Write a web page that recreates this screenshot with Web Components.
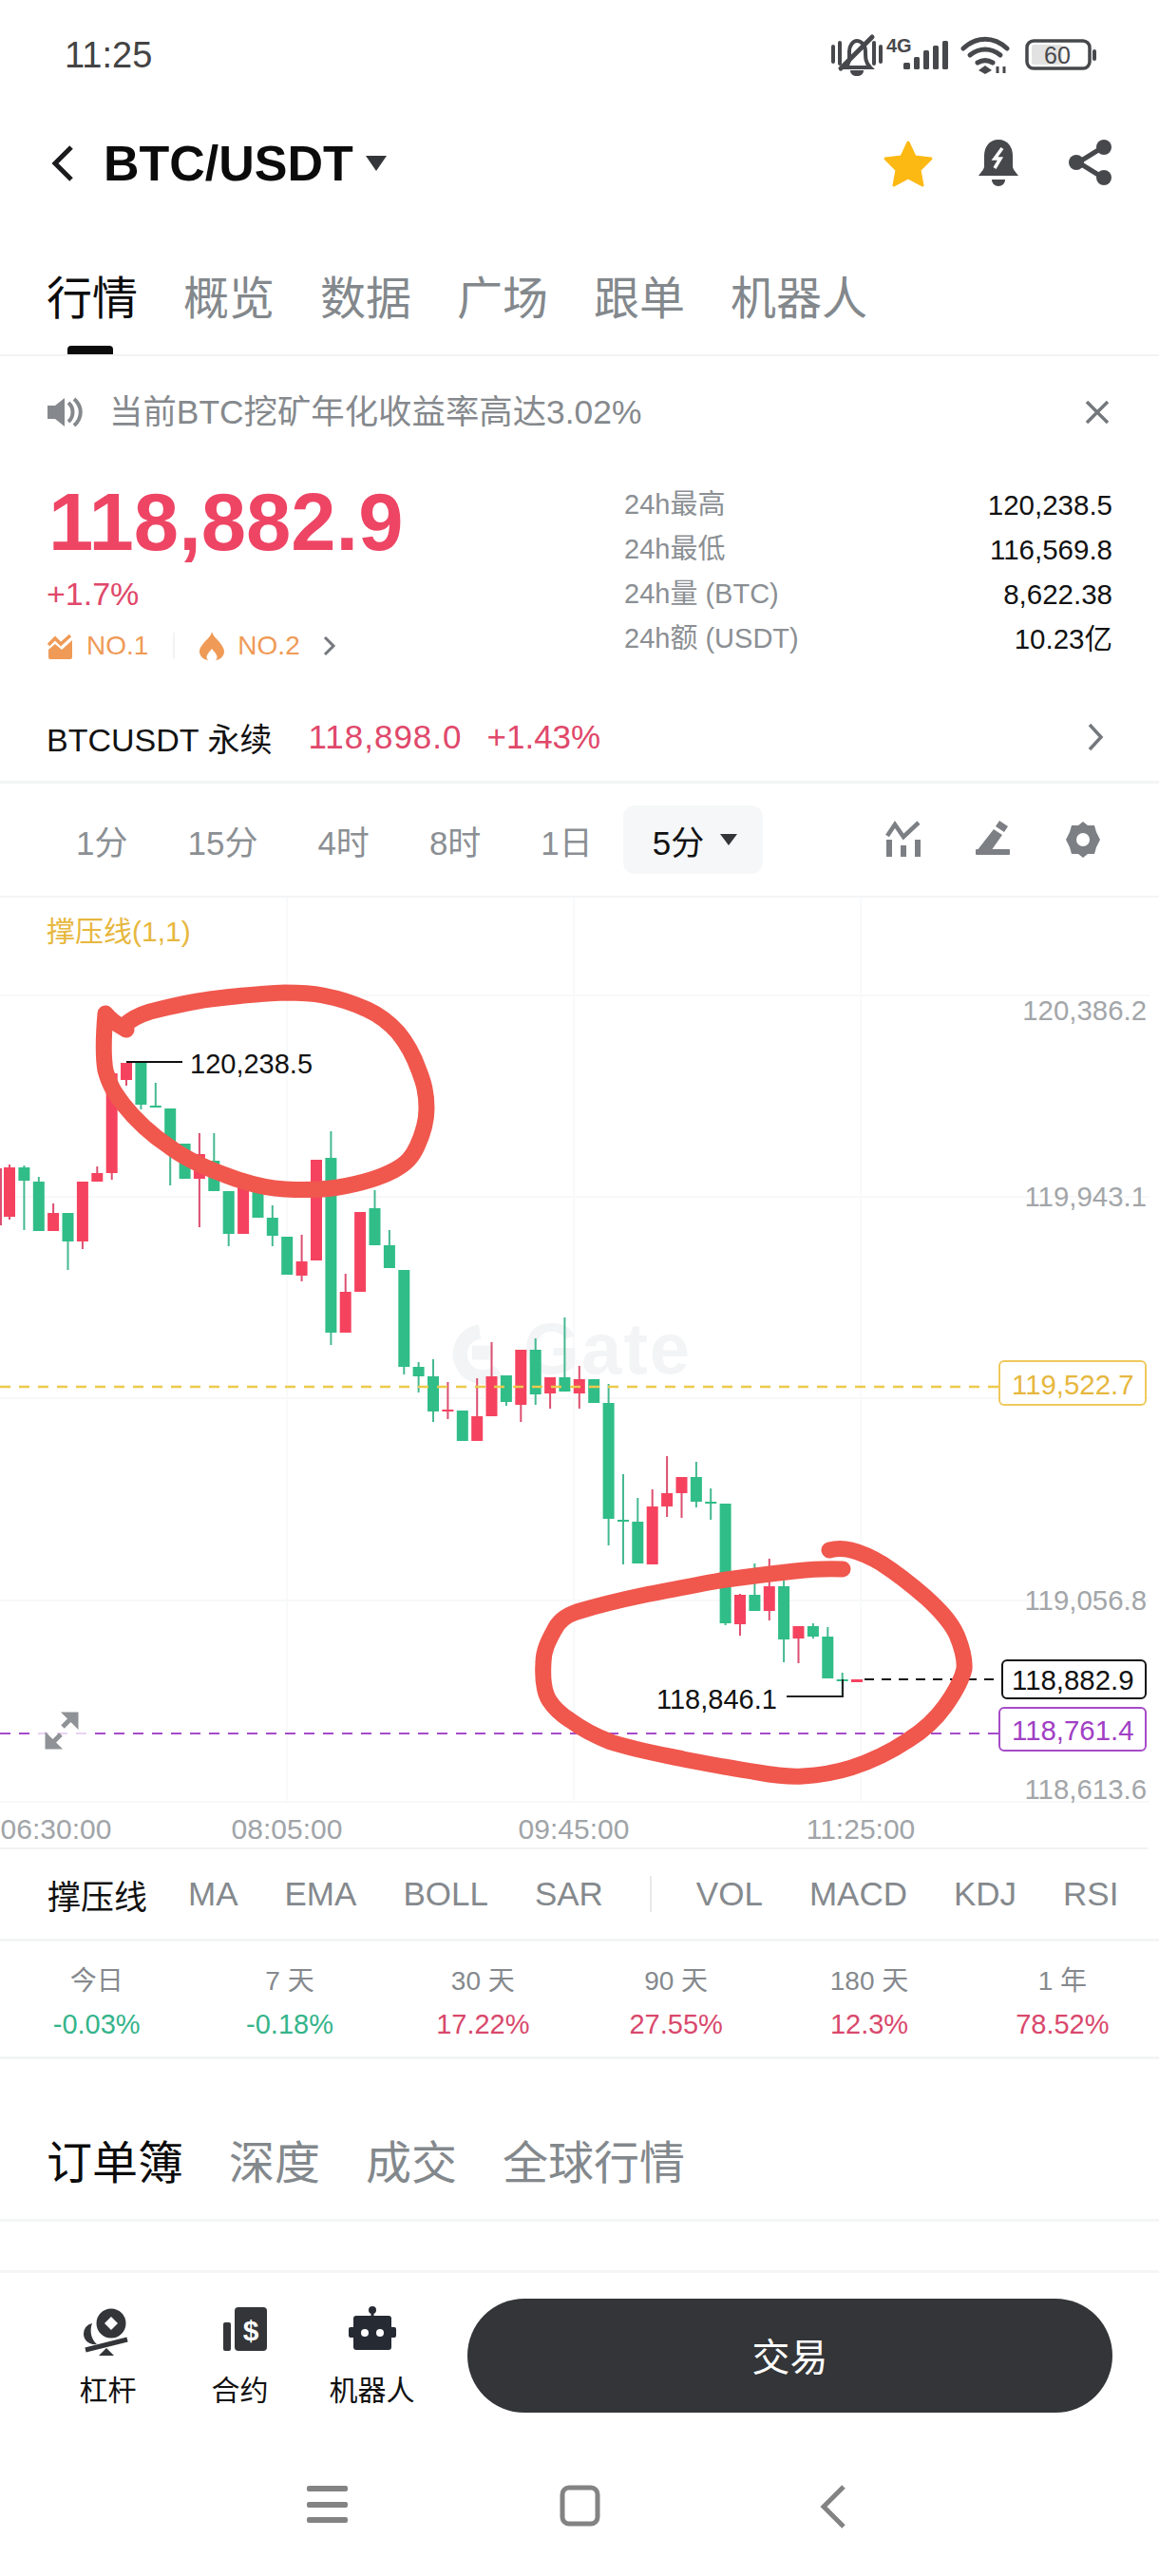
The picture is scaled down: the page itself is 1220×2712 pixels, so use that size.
<!DOCTYPE html>
<html lang="zh-CN">
<head>
<meta charset="utf-8">
<title>BTC/USDT</title>
<style>
  html, body { margin: 0; padding: 0; background: #fff; }
  body {
    width: 1220px;
    height: 2712px;
    overflow: hidden;
    font-family: "Liberation Sans", "Noto Sans CJK SC", sans-serif;
    color: #111;
  }
</style>
</head>
<body>
<status-bar></status-bar>
<market-header></market-header>
<tab-strip size="main" items="行情,概览,数据,广场,跟单,机器人" underline></tab-strip>
<notice-bar>当前BTC挖矿年化收益率高达3.02%</notice-bar>
<price-panel></price-panel>
<perp-row></perp-row>
<interval-bar></interval-bar>
<kline-chart></kline-chart>
<indicator-row></indicator-row>
<period-stats></period-stats>
<tab-strip size="orders" items="订单簿,深度,成交,全球行情"></tab-strip>
<div style="height:51px;border-top:3px solid #f4f5f6;border-bottom:3px solid #f4f5f6"></div>
<trade-bar></trade-bar>
<system-nav></system-nav>

<script>
/**
 * Base for all blocks on the page: open shadow root, css + markup from the class
 */
class Block extends HTMLElement {
  constructor() {
    super();
    this.attachShadow({ mode: 'open' });
  }
  connectedCallback() {
    this.shadowRoot.innerHTML = `<style>${this.css()}</style>${this.html()}`;
  }
  css() { return ''; }
  html() { return ''; }
}

class StatusBar extends Block {
  css() {
    return `
      :host { display: flex; height: 116px; position: relative; }
      .time { margin: 34px 0 0 68px; font-size: 38px; line-height: 48px; color: #444; }
      svg { margin-left: auto; display: block; }
      text { font-family: "Liberation Sans", sans-serif; }
    `;
  }
  html() {
    return `
      <span class="time">11:25</span>
      <svg width="350" height="116" viewBox="870 0 350 116">
        <g transform="translate(-66,0)">
        <g fill="none" stroke="#47484c" stroke-width="4" stroke-linecap="round">
          <path d="M943 49v16M950 45v22M986 45v22M993 49v16"/>
          <path d="M956 71c5-5 4-10 4-17 0-6 4-11 8-11s9 4 9 11c0 7 0 12 5 17z"/>
          <path d="M951 72 L984 39" stroke-width="5"/>
        </g>
        <path d="M961 74h14c0 4-3 6-7 6s-7-2-7-6z" fill="#47484c"/>
        </g>
        <text x="933" y="55" font-size="20" font-weight="700" fill="#47484c">4G</text>
        <g fill="#47484c">
          <rect x="951" y="66" width="7" height="7" rx="1.5"/>
          <rect x="962" y="60" width="6" height="13" rx="1.5"/>
          <rect x="972" y="53" width="6" height="20" rx="1.5"/>
          <rect x="982" y="48" width="6" height="25" rx="1.5"/>
          <rect x="992" y="43" width="6" height="30" rx="1.5"/>
        </g>
        <g fill="none" stroke="#47484c" stroke-width="5" stroke-linecap="round">
          <path d="M1014 51c14-13 32-13 46 0"/>
          <path d="M1021 58c10-8 22-8 32 0"/>
          <path d="M1029 66c5-3 11-3 16 0"/>
        </g>
        <path d="M1037 69l7 5-7 4-7-4z" fill="#47484c"/>
        <path d="M1050 70v7M1057 70v7" stroke="#47484c" stroke-width="3"/>
        <rect x="1081" y="43" width="66" height="29" rx="7" fill="none" stroke="#47484c" stroke-width="3.5"/>
        <rect x="1086" y="47" width="32" height="21" rx="2" fill="#e2e2e2"/>
        <rect x="1150" y="52" width="4" height="12" rx="2" fill="#47484c"/>
        <text x="1113" y="67" font-size="25" fill="#47484c" text-anchor="middle">60</text>
      </svg>
    `;
  }
}

class MarketHeader extends Block {
  css() {
    return `
      :host { display: flex; align-items: center; height: 112px; position: relative; }
      .back { margin-left: 53px; display: block; }
      .pair { margin-left: 30px; font-size: 52px; line-height: 60px; font-weight: 700; color: #0b0b0b; white-space: nowrap; }
      .caret { margin-left: 13px; display: block; }
      .acts { margin-left: auto; display: flex; margin-right: 49px; }
      .acts svg { display: block; }
    `;
  }
  html() {
    return `
      <svg class="back" width="26" height="40" viewBox="0 0 26 40"><path d="M22 3 L5 20 L22 37" fill="none" stroke="#1b1b1d" stroke-width="5"/></svg>
      <span class="pair">BTC/USDT</span>
      <svg class="caret" width="22" height="16" viewBox="0 0 22 16"><path d="M0 0h22L11 16z" fill="#333538"/></svg>
      <div class="acts">
        <svg width="54" height="52" viewBox="0 0 54 52" style="margin-right:46px">
          <path d="M27 4l7 15 17 2-12 12 3 16-15-8-15 8 3-16L3 21l17-2z" fill="#fdb913" stroke="#fdb913" stroke-width="3" stroke-linejoin="round"/>
        </svg>
        <svg width="44" height="50" viewBox="0 0 44 50" style="margin-right:52px">
          <path d="M22 1c10 0 15 8 15 17v11c0 3 3 6 6 10H1c3-4 6-7 6-10V18C7 9 12 1 22 1z" fill="#47484c"/>
          <path d="M15 43h14c0 4-3 7-7 7s-7-3-7-7z" fill="#47484c"/>
          <path d="M26 10l-8 11h6l-6 10" fill="none" stroke="#fff" stroke-width="3.5"/>
        </svg>
        <svg width="46" height="50" viewBox="0 0 46 50">
          <path d="M36 9L10 25l26 16" fill="none" stroke="#47484c" stroke-width="5"/>
          <circle cx="37" cy="9" r="8" fill="#47484c"/><circle cx="8" cy="25" r="8" fill="#47484c"/><circle cx="37" cy="41" r="8" fill="#47484c"/>
        </svg>
      </div>
    `;
  }
}

class TabStrip extends Block {
  css() {
    const orders = this.getAttribute('size') === 'orders';
    return `
      :host { display: flex; gap: 48px; padding-left: 49px; box-sizing: border-box; position: relative;
        height: ${orders ? 168 : 147}px; ${orders ? '' : 'border-bottom: 2px solid #f2f3f4;'}
        padding-top: ${orders ? 80 : 57}px; }
      span { font-size: 48px; line-height: 60px; color: #83888c; white-space: nowrap; position: relative; height: 60px; }
      span.on { color: #0b0b0b; }
      span.line::after { content: ""; position: absolute; left: 22px; width: 48px; height: 9px; top: 79px;
        background: #0b0b0b; border-radius: 4px 4px 0 0; }
    `;
  }
  html() {
    const mark = this.hasAttribute('underline');
    return this.getAttribute('items').split(',')
      .map((t, i) => `<span class="${i === 0 ? 'on' : ''} ${i === 0 && mark ? 'line' : ''}">${t}</span>`).join('');
  }
}

class NoticeBar extends Block {
  css() {
    return `
      :host { display: flex; align-items: center; height: 115px; padding: 3px 52px 0 50px; box-sizing: border-box; }
      svg { display: block; }
      .msg { margin-left: 28px; font-size: 35.4px; line-height: 44px; color: #85898d; white-space: nowrap; }
      .close { margin-left: auto; }
    `;
  }
  html() {
    return `
      <svg width="37" height="34" viewBox="0 0 37 34">
        <path d="M0 10h8L18 2v30L8 24H0z" fill="#85898d"/>
        <path d="M22 7c6 5 6 15 0 20" fill="none" stroke="#85898d" stroke-width="4"/>
        <path d="M28 3c9 8 9 20 0 28" fill="none" stroke="#85898d" stroke-width="4"/>
      </svg>
      <span class="msg"><slot></slot></span>
      <svg class="close" width="26" height="26" viewBox="0 0 26 26"><path d="M2 2l22 22M24 2L2 24" stroke="#74787c" stroke-width="3.5"/></svg>
    `;
  }
}

class PricePanel extends Block {
  css() {
    return `
      :host { display: flex; height: 240px; box-sizing: border-box; }
      .left { width: 657px; padding-left: 50px; box-sizing: border-box; }
      .last { margin-top: 15px; font-size: 85px; line-height: 90px; font-weight: 700; color: #ee4565; margin-left: 1px; white-space: nowrap; }
      .chg { margin-top: 10px; font-size: 34px; line-height: 40px; color: #e0486a; margin-left: -1px; }
      .rank { margin-top: 15px; display: flex; align-items: center; height: 40px; font-size: 28px; color: #ef9a56; }
      .rank svg { display: block; }
      .sep { width: 2px; height: 28px; background: #f3f3f3; margin: 0 26px; }
      .stats { width: 514px; padding-top: 18px; }
      .row { display: flex; justify-content: space-between; height: 47px; line-height: 47px; font-size: 29px; white-space: nowrap; }
      .row span:first-child { color: #8b8f93; }
      .row span:last-child { color: #111; font-size: 29.5px; }
    `;
  }
  html() {
    const rows = [['24h最高', '120,238.5'], ['24h最低', '116,569.8'], ['24h量 (BTC)', '8,622.38'], ['24h额 (USDT)', '10.23亿']];
    return `
      <div class="left">
        <div class="last">118,882.9</div>
        <div class="chg">+1.7%</div>
        <div class="rank">
          <svg width="27" height="28" viewBox="0 0 27 28" style="margin-right:14px">
            <path d="M1 13l7-7 6 6 10-9" fill="none" stroke="#ef9a56" stroke-width="3.5"/>
            <path d="M1 18l7-6 7 6 11-10v18a2 2 0 0 1-2 2H3a2 2 0 0 1-2-2z" fill="#ef9a56"/>
          </svg>
          <span>NO.1</span>
          <span class="sep"></span>
          <svg width="26" height="30" viewBox="0 0 26 30" style="margin-right:14px">
            <path d="M13 0c2 6 5 7 8 11 3 4 5 7 5 10 0 5-5 9-9 9 2-2 2-4 0-7-1-2-3-3-4-5-1 2-3 3-4 5-2 3-2 5 0 7-4 0-9-4-9-9 0-4 3-7 6-11 3-3 6-5 7-10z" fill="#ef9a56"/>
          </svg>
          <span>NO.2</span>
          <svg width="14" height="22" viewBox="0 0 14 22" style="margin-left:24px">
            <path d="M2 2l9 9-9 9" fill="none" stroke="#74787c" stroke-width="3"/>
          </svg>
        </div>
      </div>
      <div class="stats">
        ${rows.map(r => `<div class="row"><span>${r[0]}</span><span>${r[1]}</span></div>`).join('')}
      </div>
    `;
  }
}

class PerpRow extends Block {
  css() {
    return `
      :host { display: flex; align-items: center; height: 95px; padding: 0 58px 0 49px; box-sizing: border-box;
        border-bottom: 3px solid #f3f4f5; white-space: nowrap; }
      .name { font-size: 34px; color: #111; }
      .num { font-size: 35px; color: #e0486a; }
      svg { margin-left: auto; display: block; }
    `;
  }
  html() {
    return `
      <span class="name">BTCUSDT 永续</span>
      <span class="num" style="margin-left:38px;letter-spacing:1px">118,898.0</span>
      <span class="num" style="margin-left:26px">+1.43%</span>
      <svg width="18" height="30" viewBox="0 0 18 30"><path d="M3 2l12 13L3 28" fill="none" stroke="#74787c" stroke-width="3.5"/></svg>
    `;
  }
}

class IntervalBar extends Block {
  css() {
    return `
      :host { display: flex; align-items: center; height: 120px; padding-left: 80px; box-sizing: border-box;
        border-bottom: 2px solid #f3f4f5; white-space: nowrap; font-size: 35px; color: #8b8f93; }
      span.i { margin-right: 63px; }
      .pick { display: flex; align-items: center; width: 147px; height: 72px; margin-left: -31px; padding-left: 31px; box-sizing: border-box;
        background: #f5f7f8; border-radius: 12px; color: #111; }
      .pick svg { margin-left: 17px; }
      .tools { margin-left: auto; display: flex; margin-right: 62px; }
      .tools svg { display: block; }
    `;
  }
  html() {
    const items = ['1分', '15分', '4时', '8时', '1日'];
    return `
      ${items.map(t => `<span class="i">${t}</span>`).join('')}
      <div class="pick"><span>5分</span><svg width="18" height="12" viewBox="0 0 18 12"><path d="M0 0h18L9 12z" fill="#333538"/></svg></div>
      <div class="tools">
        <svg width="40" height="38" viewBox="0 0 40 38" style="margin-right:55px">
          <path d="M3 16L11 4l9 13 16-15" fill="none" stroke="#7c8084" stroke-width="4.5"/>
          <rect x="2" y="20" width="6" height="18" fill="#7c8084"/><rect x="17" y="26" width="6" height="12" fill="#7c8084"/><rect x="32" y="20" width="6" height="18" fill="#7c8084"/>
        </svg>
        <svg width="38" height="36" viewBox="0 0 38 36" style="margin-right:58px">
          <path d="M26 0l9 6-4 6-9-6zM20 9l9 6-12 17H2z" fill="#7c8084"/>
          <rect x="1" y="30" width="36" height="6" rx="1" fill="#7c8084"/>
        </svg>
        <svg width="36" height="40" viewBox="0 0 36 40">
          <path d="M18 1l5 4 7 0 2 7 4 8-4 8-2 7-7 0-5 4-5-4-7 0-2-7-4-8 4-8 2-7 7 0z" fill="#7c8084"/>
          <circle cx="18" cy="20" r="7" fill="#fff"/>
        </svg>
      </div>
    `;
  }
}

// color, wick top, body top, body bottom, wick bottom
const CANDLES = [
  ['r',1226,1229,1281,1284],['g',1227,1229,1243,1295],['g',1239,1244,1296,1296],['r',1267,1277,1296,1296],
  ['g',1277,1277,1307,1337],['r',1244,1244,1307,1315],['r',1228,1235,1244,1244],['r',1130,1130,1235,1242],
  ['r',1119,1119,1137,1143],['g',1119,1119,1163,1168],['g',1140,1164,1166,1166],['g',1167,1167,1212,1248],
  ['g',1204,1204,1241,1241],['r',1193,1215,1241,1292],['g',1193,1222,1254,1254],['g',1254,1254,1299,1312],
  ['r',1245,1245,1299,1299],['g',1245,1245,1282,1282],['g',1269,1282,1301,1312],['g',1302,1302,1342,1342],
  ['r',1300,1328,1343,1349],['r',1221,1221,1327,1327],['g',1191,1219,1403,1416],['r',1341,1360,1403,1403],
  ['r',1276,1276,1360,1360],['g',1253,1272,1311,1311],['g',1295,1311,1335,1335],['g',1337,1337,1439,1447],
  ['g',1434,1439,1449,1466],['g',1431,1449,1486,1497],['r',1455,1484,1486,1494],['g',1485,1485,1517,1517],
  ['r',1451,1491,1517,1517],['r',1413,1449,1491,1491],['g',1448,1448,1476,1480],['r',1421,1421,1479,1497],
  ['g',1409,1421,1468,1479],['r',1450,1450,1467,1483],['g',1387,1450,1465,1465],['r',1438,1452,1467,1483],
  ['g',1452,1452,1477,1477],['g',1457,1477,1599,1627],['g',1552,1600,1602,1647],['g',1577,1602,1646,1646],
  ['r',1568,1586,1647,1647],['r',1533,1572,1586,1597],['r',1555,1555,1572,1598],['g',1539,1555,1581,1587],
  ['g',1567,1581,1583,1600],['g',1583,1583,1709,1711],['r',1678,1679,1710,1722],['g',1646,1679,1696,1696],
  ['r',1641,1670,1696,1706],['g',1664,1670,1726,1750],['r',1712,1712,1725,1751],['g',1709,1712,1723,1725],
  ['g',1713,1723,1767,1767],['g',1761,1768,1770,1786],['r',1768,1768,1771,1771]
];

class KlineChart extends Block {
  css() {
    return `
      :host { display: block; height: 1002px; }
      svg { display: block; }
      text { font-family: "Liberation Sans", "Noto Sans CJK SC", sans-serif; }
      .y { font-size: 29.4px; fill: #a3a6a9; text-anchor: end; }
      .t { font-size: 30px; fill: #a0a4a8; text-anchor: middle; }
      .p { font-size: 29px; fill: #111; }
    `;
  }
  candles() {
    const body = { r: '#f5435f', g: '#30bd88' };
    const wick = { r: '#dc4f70', g: '#45b990' };
    return CANDLES.map((c, i) => {
      const x = 10 + 15.38 * i;
      return `<rect x="${(x - 1).toFixed(1)}" y="${c[1]}" width="2" height="${c[4] - c[1]}" fill="${wick[c[0]]}"/>` +
        `<rect x="${(x - 6).toFixed(1)}" y="${c[2]}" width="12" height="${c[3] - c[2]}" fill="${body[c[0]]}"/>`;
    }).join('');
  }
  html() {
    const hs = [1048, 1260, 1472, 1685, 1897];
    const vs = [302, 604, 906];
    return `
      <svg width="1220" height="1002" viewBox="0 945 1220 1002">
        ${hs.map(y => `<path d="M0 ${y}H1210" stroke="#f7f8f9" stroke-width="2"/>`).join('')}
        ${vs.map(x => `<path d="M${x} 945V1897" stroke="#f8f9fa" stroke-width="2"/>`).join('')}
        <path d="M0 1946H1208" stroke="#f1f2f3" stroke-width="2"/>

        <g fill="none" stroke="#f2f4f5" stroke-width="15">
          <path d="M505 1402a24 24 0 1 0 20 41"/>
          <path d="M497 1424h22"/>
        </g>
        <text x="551" y="1446" font-size="76" font-weight="700" fill="#f2f4f5" style="letter-spacing:2px">Gate</text>

        <text x="49" y="991" font-size="30" fill="#e7b73e">撑压线(1,1)</text>

        <text class="y" x="1207" y="1074">120,386.2</text>
        <text class="y" x="1207" y="1270">119,943.1</text>
        <text class="y" x="1207" y="1695">119,056.8</text>
        <text class="y" x="1207" y="1894">118,613.6</text>

        <rect x="0" y="1230" width="2" height="60" fill="#dc4f70"/>
        ${this.candles()}

        <path d="M0 1460H1051" stroke="#ecc94b" stroke-width="2.5" stroke-dasharray="11 9"/>
        <path d="M0 1825H1051" stroke="#a64bc9" stroke-width="2" stroke-dasharray="11 9"/>
        <path d="M910 1768H1052" stroke="#111" stroke-width="2" stroke-dasharray="10 8"/>

        <path d="M133 1118H192" stroke="#111" stroke-width="2"/>
        <text class="p" x="200" y="1130">120,238.5</text>
        <path d="M828 1786H887V1768" fill="none" stroke="#222" stroke-width="2"/>
        <text class="p" x="691" y="1799">118,846.1</text>

        <rect x="1052" y="1433" width="154" height="46" rx="5" fill="#fff" stroke="#f0c95c" stroke-width="2"/>
        <text x="1065" y="1468" font-size="29.4" fill="#e7b73e">119,522.7</text>
        <rect x="1055" y="1748" width="151" height="40" rx="5" fill="#fff" stroke="#111" stroke-width="2"/>
        <text x="1065" y="1779" font-size="29.4" fill="#111">118,882.9</text>
        <rect x="1052" y="1798" width="154" height="45" rx="5" fill="#fff" stroke="#a64bc9" stroke-width="2"/>
        <text x="1065" y="1832" font-size="29.4" fill="#a040c4">118,761.4</text>

        <rect x="38" y="1797" width="54" height="50" rx="8" fill="#fff" opacity="0.75"/>
        <path d="M66 1818l12-12M70 1805h10v10z" stroke="#8f9296" stroke-width="5" fill="#8f9296"/>
        <path d="M64 1826l-12 12M60 1839H50v-10z" stroke="#8f9296" stroke-width="5" fill="#8f9296"/>

        <g fill="none" stroke="#f0574d" stroke-width="17" stroke-linecap="round" stroke-linejoin="round">
          <path d="M133 1084C126 1080 118 1076 111 1067C109 1090 108 1110 111 1127C116 1145 122 1152 130 1163C145 1182 160 1195 178 1207C195 1220 215 1229 237 1237C260 1246 280 1251 300 1252C320 1253 338 1253 356 1250C380 1246 400 1240 415 1232C428 1225 434 1218 439 1207C446 1192 449 1180 449 1167C449 1150 446 1140 441 1127C435 1110 428 1098 419 1087C410 1077 400 1069 387 1063C372 1056 356 1051 340 1048C325 1045 312 1045 300 1045C275 1046 245 1049 221 1052C198 1055 178 1060 158 1065C148 1068 138 1073 130 1080"/>
          <path d="M887 1652C870 1651 855 1652 837 1654C810 1657 785 1660 758 1664C730 1669 705 1674 679 1679C655 1684 630 1690 607 1697C595 1701 587 1708 583 1717C577 1728 572 1738 572 1750C571 1765 572 1780 578 1790C585 1801 592 1806 600 1811C615 1822 630 1829 643 1834C668 1842 695 1847 719 1852C745 1857 772 1862 798 1866C815 1869 830 1871 845 1870C862 1869 880 1866 896 1861C918 1854 938 1844 956 1832C972 1822 985 1810 995 1796C1005 1782 1012 1770 1015 1757C1016 1745 1012 1733 1007 1721C1000 1706 988 1694 975 1682C960 1669 945 1657 928 1646C918 1640 908 1635 896 1632C888 1630 880 1630 873 1632"/>
        </g>

        <text class="t" x="59" y="1936">06:30:00</text>
        <text class="t" x="302" y="1936">08:05:00</text>
        <text class="t" x="604" y="1936">09:45:00</text>
        <text class="t" x="906" y="1936">11:25:00</text>
      </svg>
    `;
  }
}

class IndicatorRow extends Block {
  css() {
    return `
      :host { display: flex; align-items: center; height: 97px; width: 1220px; box-sizing: border-box;
        border-bottom: 3px solid #f3f4f5; }
      .clip { display: flex; align-items: center; gap: 49px; width: 1125px; margin-left: 50px; overflow: hidden;
        font-size: 35px; color: #85898d; white-space: nowrap; }
      .on { color: #111; margin-right: -6px; }
      .bar { flex: none; width: 2px; height: 38px; background: #e6e8ea; margin-right: -2px; }
    `;
  }
  html() {
    return `
      <div class="clip">
        <span class="on">撑压线</span><span>MA</span><span>EMA</span><span>BOLL</span><span>SAR</span>
        <span class="bar"></span>
        <span>VOL</span><span>MACD</span><span>KDJ</span><span>RSI</span>
      </div>
    `;
  }
}

class PeriodStats extends Block {
  css() {
    return `
      :host { display: grid; grid-template-columns: repeat(6, 1fr); height: 124px; box-sizing: border-box;
        border-bottom: 3px solid #f3f4f5; text-align: center; white-space: nowrap; }
      .k { margin-top: 23px; font-size: 28px; line-height: 38px; color: #85898d; }
      .v { margin-top: 7px; font-size: 29px; line-height: 38px; }
      .up { color: #d9486c; }
      .dn { color: #35b48a; }
    `;
  }
  html() {
    const cols = [['今日', '-0.03%', 'dn'], ['7 天', '-0.18%', 'dn'], ['30 天', '17.22%', 'up'],
      ['90 天', '27.55%', 'up'], ['180 天', '12.3%', 'up'], ['1 年', '78.52%', 'up']];
    return cols.map(c => `<div><div class="k">${c[0]}</div><div class="v ${c[2]}">${c[1]}</div></div>`).join('');
  }
}

class TradeBar extends Block {
  css() {
    return `
      :host { display: flex; height: 205px; padding: 27px 0 0 44px; box-sizing: border-box; }
      .tool { width: 139px; display: flex; flex-direction: column; align-items: center; height: 122px; padding-top: 8px; box-sizing: content-box; }
      .tool svg { display: block; }
      .tool span { margin-top: 3px; font-size: 30px; line-height: 40px; color: #111; white-space: nowrap; }
      .go { width: 679px; height: 120px; margin-left: 31px; border-radius: 60px; background: #333538; color: #fff;
        font-size: 40px; line-height: 124px; text-align: center; }
      text { font-family: "Liberation Sans", sans-serif; }
    `;
  }
  html() {
    return `
      <div class="tool">
        <svg width="60" height="66" viewBox="0 0 60 66">
          <path d="M13 18a11 11 0 0 0-9 11c0 7 6 12 14 11-6-5-8-14-5-22z" fill="#333538"/>
          <circle cx="33" cy="18" r="15.5" fill="#333538"/>
          <path d="M33 11l7 7-7 7-7-7z" fill="#fff"/>
          <path d="M6 46L50 35" stroke="#333538" stroke-width="5"/>
          <path d="M28 44l8 8H20z" fill="#333538"/>
        </svg>
        <span>杠杆</span>
      </div>
      <div class="tool">
        <svg width="60" height="66" viewBox="0 0 60 66">
          <rect x="12" y="17" width="8" height="30" rx="2" fill="#333538"/>
          <rect x="24" y="1" width="34" height="46" rx="4" fill="#333538"/>
          <text x="41" y="36" font-size="30" font-weight="700" fill="#fff" text-anchor="middle">$</text>
        </svg>
        <span>合约</span>
      </div>
      <div class="tool">
        <svg width="60" height="66" viewBox="0 0 60 66">
          <circle cx="30" cy="4" r="4" fill="#262a33"/>
          <rect x="28.5" y="4" width="3" height="8" fill="#262a33"/>
          <rect x="10" y="10" width="40" height="36" rx="3" fill="#262a33"/>
          <rect x="5" y="22" width="50" height="11" rx="2" fill="#262a33"/>
          <circle cx="22" cy="28" r="4" fill="#fff"/><circle cx="38" cy="28" r="4" fill="#fff"/>
        </svg>
        <span>机器人</span>
      </div>
      <div class="go">交易</div>
    `;
  }
}

class SystemNav extends Block {
  css() {
    return `
      :host { display: flex; padding: 18px 0 0 323px; height: 114px; box-sizing: border-box; }
      svg { display: block; }
    `;
  }
  html() {
    return `
      <svg width="43" height="46" viewBox="0 0 43 46" style="margin-right:223px">
        <rect y="1" width="43" height="6" rx="2" fill="#838383"/>
        <rect y="18" width="43" height="6" rx="2" fill="#838383"/>
        <rect y="34" width="43" height="6" rx="2" fill="#838383"/>
      </svg>
      <svg width="43" height="46" viewBox="0 0 43 46" style="margin-right:231px">
        <rect x="3" y="3" width="37" height="38" rx="7" fill="none" stroke="#838383" stroke-width="5"/>
      </svg>
      <svg width="28" height="46" viewBox="0 0 28 46">
        <path d="M25 2L4 23l21 21" fill="none" stroke="#838383" stroke-width="5"/>
      </svg>
    `;
  }
}

customElements.define('status-bar', StatusBar);
customElements.define('market-header', MarketHeader);
customElements.define('tab-strip', TabStrip);
customElements.define('notice-bar', NoticeBar);
customElements.define('price-panel', PricePanel);
customElements.define('perp-row', PerpRow);
customElements.define('interval-bar', IntervalBar);
customElements.define('kline-chart', KlineChart);
customElements.define('indicator-row', IndicatorRow);
customElements.define('period-stats', PeriodStats);
customElements.define('trade-bar', TradeBar);
customElements.define('system-nav', SystemNav);
</script>
</body>
</html>
